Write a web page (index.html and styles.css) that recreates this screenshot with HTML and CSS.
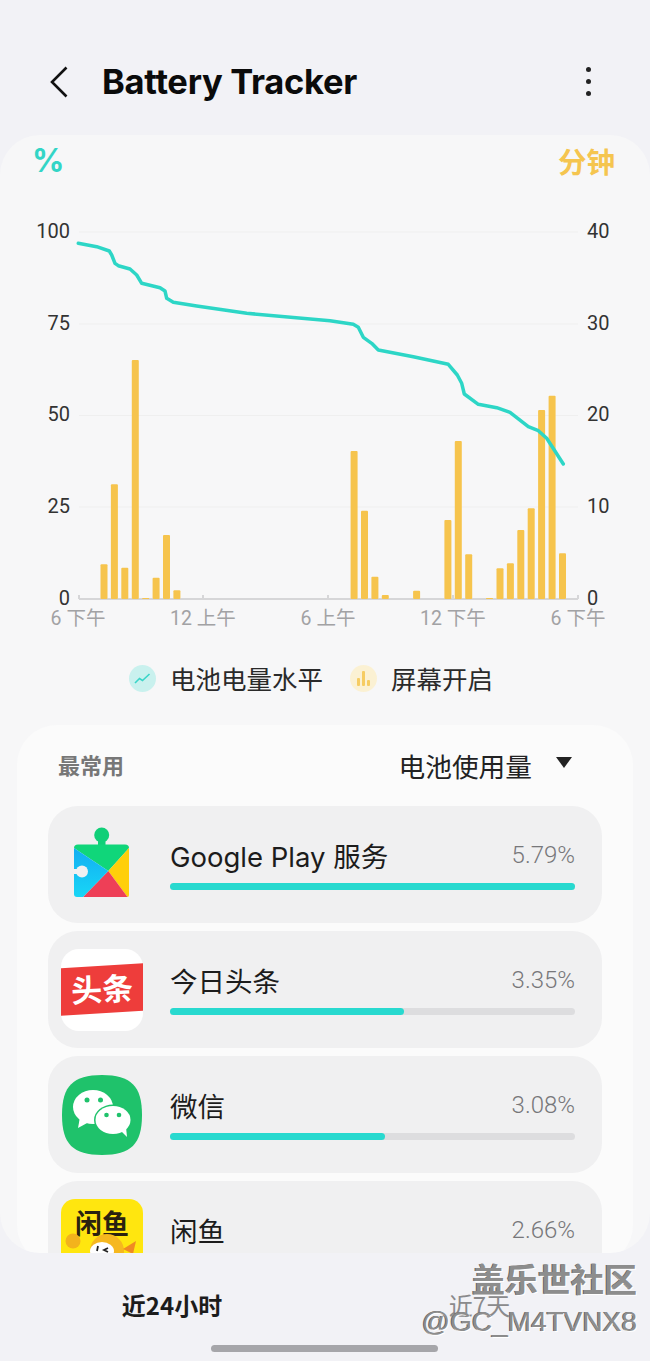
FILE: index.html
```html
<!DOCTYPE html>
<html lang="zh-CN">
<head>
  <meta charset="UTF-8">
  <meta name="viewport" content="width=device-width, initial-scale=1.0">
  <title>Battery Tracker</title>
  <link rel="stylesheet" href="styles.css">
</head>
<body>
  <div class="screen">
    <header class="topbar">
      <svg class="back-icon" viewBox="0 0 20 32" width="20" height="32"><path d="M17.5 1.5 3 16l14.5 14.5"/></svg>
      <h1 class="title">Battery Tracker</h1>
      <div class="more-icon"><span></span><span></span><span></span></div>
    </header>

    <main class="content">
      <section class="chart-card">
        <div class="units">
          <span class="unit-left">%</span>
          <span class="unit-right">分钟</span>
        </div>

        <svg class="chart" viewBox="0 200 650 440" width="650" height="440">
          <g class="grid">
            <line x1="79" x2="578" y1="232" y2="232"/>
            <line x1="79" x2="578" y1="324" y2="324"/>
            <line x1="79" x2="578" y1="415.5" y2="415.5"/>
            <line x1="79" x2="578" y1="507" y2="507"/>
          </g>
          <g class="axis">
            <line x1="79" x2="578" y1="599" y2="599"/>
            <line x1="79" x2="79" y1="595" y2="599"/>
            <line x1="203" x2="203" y1="595" y2="599"/>
            <line x1="328" x2="328" y1="595" y2="599"/>
            <line x1="453" x2="453" y1="595" y2="599"/>
            <line x1="578" x2="578" y1="595" y2="599"/>
          </g>
          <g class="bars">
            <rect x="100.5" y="564.3" width="7" height="34.7" rx="1"/>
            <rect x="110.9" y="484.3" width="7" height="114.7" rx="1"/>
            <rect x="121.3" y="567.7" width="7" height="31.3" rx="1"/>
            <rect x="131.8" y="360" width="7" height="239" rx="1"/>
            <rect x="142.2" y="598" width="7" height="1" rx="0.5"/>
            <rect x="152.6" y="577.7" width="7" height="21.3" rx="1"/>
            <rect x="163" y="535" width="7" height="64" rx="1"/>
            <rect x="173.4" y="590.3" width="7" height="8.7" rx="1"/>
            <rect x="350.6" y="451" width="7" height="148" rx="1"/>
            <rect x="361" y="510.7" width="7" height="88.3" rx="1"/>
            <rect x="371.4" y="576.7" width="7" height="22.3" rx="1"/>
            <rect x="381.8" y="595" width="7" height="4" rx="1"/>
            <rect x="413.1" y="590.7" width="7" height="8.3" rx="1"/>
            <rect x="444.4" y="520" width="7" height="79" rx="1"/>
            <rect x="454.8" y="441" width="7" height="158" rx="1"/>
            <rect x="465.2" y="554.3" width="7" height="44.7" rx="1"/>
            <rect x="486" y="598" width="7" height="1" rx="0.5"/>
            <rect x="496.5" y="568.3" width="7" height="30.7" rx="1"/>
            <rect x="506.9" y="563.3" width="7" height="35.7" rx="1"/>
            <rect x="517.3" y="530" width="7" height="69" rx="1"/>
            <rect x="527.7" y="508.3" width="7" height="90.7" rx="1"/>
            <rect x="538.1" y="410" width="7" height="189" rx="1"/>
            <rect x="548.6" y="395.7" width="7" height="203.3" rx="1"/>
            <rect x="559" y="553.3" width="7" height="45.7" rx="1"/>
          </g>
          <polyline class="level" points="78.3,243.3 96.7,246.7 109.3,251 111.7,255 115,263.3 118.3,265.7 130,269 136.7,275 141.7,283.3 160,287.7 165,291 166.7,298.3 173.3,302.3 196.7,306 246.7,313.3 330,320.7 353.3,324.3 358.3,327.3 363.3,337.3 371.7,343.3 378.3,350 413.3,356.7 448.3,364.3 457.3,375 461.7,383.3 464.3,394 478.3,404.3 496.7,407.7 510,412.3 528.3,426.7 538.3,430.7 546.7,438.3 563.3,464"/>
          <g class="y-left">
            <text x="70" y="238">100</text>
            <text x="70" y="330">75</text>
            <text x="70" y="421">50</text>
            <text x="70" y="513">25</text>
            <text x="70" y="605">0</text>
          </g>
          <g class="y-right">
            <text x="587" y="238">40</text>
            <text x="587" y="330">30</text>
            <text x="587" y="421">20</text>
            <text x="587" y="513">10</text>
            <text x="587" y="605">0</text>
          </g>
          <g class="x-labels">
            <text x="78" y="625">6 下午</text>
            <text x="203" y="625">12 上午</text>
            <text x="328" y="625">6 上午</text>
            <text x="453" y="625">12 下午</text>
            <text x="578" y="625">6 下午</text>
          </g>
        </svg>

        <div class="legend">
          <div class="legend-item">
            <svg class="legend-icon" viewBox="0 0 27 27" width="27" height="27">
              <circle cx="13.5" cy="13.5" r="13.5" fill="#c9f1ee"/>
              <path d="M6 18l4.5-4.5 3 2L20.5 9" fill="none" stroke="#3ad5c8" stroke-width="1.6"/>
            </svg>
            <span>电池电量水平</span>
          </div>
          <div class="legend-item">
            <svg class="legend-icon" viewBox="0 0 27 27" width="27" height="27">
              <circle cx="13.5" cy="13.5" r="13.5" fill="#fbf1d3"/>
              <rect x="7" y="13" width="3" height="8" rx="1" fill="#f6cc62"/>
              <rect x="12" y="6" width="3" height="15" rx="1" fill="#f6cc62"/>
              <rect x="17" y="15" width="3" height="6" rx="1" fill="#f6cc62"/>
            </svg>
            <span>屏幕开启</span>
          </div>
        </div>
      </section>

      <section class="usage-card">
        <div class="usage-head">
          <span class="usage-label">最常用</span>
          <span class="usage-select">电池使用量<i class="caret"></i></span>
        </div>

        <div class="app-row">
          <svg class="app-icon" viewBox="0 0 82 82" width="82" height="82">
            <defs>
              <linearGradient id="playBlue" x1="0" y1="0" x2="0" y2="1">
                <stop offset="0" stop-color="#12aef2"/>
                <stop offset="1" stop-color="#18d6f6"/>
              </linearGradient>
            </defs>
            <circle cx="40.7" cy="11" r="7.5" fill="#10cf78"/>
            <rect x="37" y="14" width="7.5" height="8" fill="#10cf78"/>
            <path d="M13 24Q13 20.5 17 20.5H64Q68 20.5 68 24L47.3 47Z" fill="#10d67a"/>
            <path d="M68 24V71Q68 73 66.5 73L47.3 47Z" fill="#ffcf0a"/>
            <path d="M47.3 47 66.5 73H22Z" fill="#ee3f57"/>
            <path d="M13 24 47.3 47 22 73H16Q13 73 13 70Z" fill="url(#playBlue)"/>
            <circle cx="21" cy="47.5" r="6" fill="#f0f0f1"/>
            <rect x="12" y="45" width="6" height="5" fill="#f0f0f1"/>
          </svg>
          <div class="app-info">
            <div class="app-line"><span class="app-name">Google Play 服务</span><span class="app-pct">5.79%</span></div>
            <div class="track"><div class="fill" style="width: 100%"></div></div>
          </div>
        </div>

        <div class="app-row">
          <svg class="app-icon" viewBox="0 0 82 82" width="82" height="82">
            <rect width="82" height="82" rx="18" fill="#fff"/>
            <path d="M0 19.3 82 14.3V61.7L0 66.7Z" fill="#ee3d3b"/>
            <text class="toutiao-text" x="41" y="52" transform="rotate(-3 41 40)">头条</text>
          </svg>
          <div class="app-info">
            <div class="app-line"><span class="app-name">今日头条</span><span class="app-pct">3.35%</span></div>
            <div class="track"><div class="fill" style="width: 57.8%"></div></div>
          </div>
        </div>

        <div class="app-row">
          <svg class="app-icon" viewBox="0 0 82 82" width="82" height="82">
            <path d="M41 1C70 1 81 12 81 41S70 81 41 81 1 70 1 41 12 1 41 1Z" fill="#1fc26b"/>
            <ellipse cx="32" cy="33" rx="20" ry="17" fill="#fff"/>
            <path d="M19 43l-2 11 11-6z" fill="#fff"/>
            <ellipse cx="52" cy="46" rx="19" ry="15.5" fill="#1fc26b"/>
            <ellipse cx="52" cy="46" rx="17.5" ry="14" fill="#fff"/>
            <path d="M60 57l6 6-1-10z" fill="#fff"/>
            <circle cx="26" cy="26" r="2.5" fill="#1fc26b"/>
            <circle cx="39.5" cy="26" r="2.5" fill="#1fc26b"/>
            <circle cx="45.5" cy="41" r="2.3" fill="#1fc26b"/>
            <circle cx="58" cy="41" r="2.3" fill="#1fc26b"/>
          </svg>
          <div class="app-info">
            <div class="app-line"><span class="app-name">微信</span><span class="app-pct">3.08%</span></div>
            <div class="track"><div class="fill" style="width: 53%"></div></div>
          </div>
        </div>

        <div class="app-row">
          <svg class="app-icon" viewBox="0 0 82 82" width="82" height="82">
            <rect width="82" height="82" rx="14" fill="#ffe60f"/>
            <text class="xianyu-text" x="41" y="35">闲鱼</text>
            <circle cx="46" cy="52" r="17" fill="#f6b81f"/>
            <ellipse cx="41" cy="52" rx="12" ry="9" fill="#fff"/>
            <path d="M37 47l-1 5M47 49l-4 2 4 2" fill="none" stroke="#222" stroke-width="1.8"/>
            <circle cx="12" cy="42" r="7.5" fill="#f3b31c"/>
            <path d="M62 50l13-8-3 13z" fill="#f08a24"/>
          </svg>
          <div class="app-info">
            <div class="app-line"><span class="app-name">闲鱼</span><span class="app-pct">2.66%</span></div>
            <div class="track"><div class="fill" style="width: 44.7%"></div></div>
          </div>
        </div>
      </section>
    </main>

    <nav class="tabs">
      <span class="tab tab-active">近24小时</span>
      <span class="tab">近7天</span>
    </nav>
    <div class="home-bar"></div>

    <div class="watermark">
      <div class="wm-top">盖乐世社区</div>
      <div class="wm-bottom">@GC_M4TVNX8</div>
    </div>
  </div>
</body>
</html>
```

FILE: styles.css
```css
* {
  box-sizing: border-box;
}
body {
  margin: 0;
  background: #f2f2f6;
  font-family: "Noto Sans CJK SC", Roboto, sans-serif;
  color: #222;
}
.screen {
  position: relative;
  width: 650px;
  height: 1361px;
  overflow: hidden;
  display: flex;
  flex-direction: column;
}

/* top bar */
.topbar {
  height: 135px;
  flex-shrink: 0;
  display: flex;
  align-items: center;
  padding: 28px 59px 0 49px;
}
.back-icon path {
  fill: none;
  stroke: #111;
  stroke-width: 2.6;
}
.title {
  margin: 0 0 0 33px;
  flex: 1;
  font-family: Inter, Roboto, sans-serif;
  font-size: 34.5px;
  font-weight: 700;
  letter-spacing: -0.3px;
  color: #0b0b0b;
}
.more-icon {
  display: flex;
  flex-direction: column;
  gap: 7px;
}
.more-icon span {
  width: 5px;
  height: 5px;
  border-radius: 50%;
  background: #222;
}

/* main card */
.content {
  height: 1118px;
  flex-shrink: 0;
  background: #f7f7f8;
  border-radius: 40px;
  overflow: hidden;
}
.chart-card {
  height: 590px;
}
.units {
  height: 65px;
  display: flex;
  justify-content: space-between;
  align-items: center;
  padding: 0 35px 15px 32px;
  font-weight: 700;
}
.unit-left {
  font-family: Inter, sans-serif;
  font-size: 32px;
  color: #33d5c6;
}
.unit-right {
  font-size: 28.5px;
  color: #f5c54f;
}
.chart {
  display: block;
}
.grid line {
  stroke: #efefef;
  stroke-width: 1;
}
.axis line {
  stroke: #d6d6d8;
  stroke-width: 2;
}
.bars rect {
  fill: #f6c44d;
}
.level {
  fill: none;
  stroke: #2dd6c6;
  stroke-width: 3.5;
  stroke-linejoin: round;
  stroke-linecap: round;
}
.y-left text,
.y-right text {
  font-family: Roboto, sans-serif;
  font-size: 20px;
  fill: #333;
}
.y-left text {
  text-anchor: end;
}
.x-labels text {
  font-family: Roboto, "Noto Sans CJK SC", sans-serif;
  font-size: 19.5px;
  fill: #a2a2a4;
  text-anchor: middle;
}
.legend {
  display: flex;
  justify-content: center;
  gap: 27px;
  margin-top: 20px;
  padding-right: 28px;
  font-size: 25.5px;
  line-height: 36px;
  color: #2a2a2a;
}
.legend-item {
  display: flex;
  align-items: center;
  gap: 14px;
}

/* usage list */
.usage-card {
  margin: 0 17px;
  padding: 0 31px;
  height: 540px;
  background: #fbfbfb;
  border-radius: 40px;
}
.usage-head {
  height: 81px;
  display: flex;
  justify-content: space-between;
  align-items: center;
  padding: 0 30px 0 10px;
}
.usage-label {
  font-size: 22px;
  font-weight: 700;
  color: #777;
  margin-bottom: 3px;
}
.usage-select {
  display: flex;
  align-items: center;
  gap: 24px;
  font-size: 26.7px;
  color: #222;
}
.caret {
  width: 0;
  height: 0;
  border-left: 8px solid transparent;
  border-right: 8px solid transparent;
  border-top: 11px solid #222;
  margin-bottom: 6px;
}
.app-row {
  height: 117px;
  margin-bottom: 8px;
  display: flex;
  align-items: center;
  gap: 27px;
  padding: 0 27px 0 13px;
  background: #f0f0f1;
  border-radius: 30px;
}
.app-icon {
  flex-shrink: 0;
}
.app-info {
  flex: 1;
  padding-bottom: 2px;
}
.app-line {
  display: flex;
  justify-content: space-between;
  align-items: center;
  height: 40px;
  margin-bottom: 6px;
}
.app-name {
  font-family: Inter, "Noto Sans CJK SC", sans-serif;
  font-size: 27.5px;
  color: #1c1c1c;
  margin-bottom: 4px;
}
.app-pct {
  font-family: Roboto, sans-serif;
  font-size: 24px;
  font-weight: 300;
  color: #77777a;
  margin-bottom: 5px;
}
.track {
  height: 7px;
  border-radius: 4px;
  background: #dddddf;
}
.fill {
  height: 100%;
  border-radius: 4px;
  background: #28d9cf;
}
.toutiao-text {
  font-size: 31px;
  font-weight: 700;
  fill: #fff;
  text-anchor: middle;
}
.xianyu-text {
  font-size: 27px;
  font-weight: 700;
  fill: #2a2210;
  text-anchor: middle;
}

/* bottom tabs */
.tabs {
  flex: 1;
  display: flex;
  align-items: flex-start;
  padding-top: 37px;
  background: #f2f2f6;
  position: relative;
}
.tab {
  width: 50%;
  text-align: center;
  font-size: 24px;
  line-height: 30px;
  color: #8a8a8c;
}
.tab-active {
  padding-left: 19px;
  font-weight: 700;
  color: #1c1c1c;
}
.tab:last-child {
  padding-right: 16px;
}
.home-bar {
  position: absolute;
  left: 211px;
  bottom: 9px;
  width: 227px;
  height: 7px;
  border-radius: 4px;
  background: #a6a6aa;
}

/* watermark over the corner */
.watermark {
  position: absolute;
  right: 13px;
  bottom: 22px;
  text-align: right;
  color: #8d8d8d;
  text-shadow: 1px 1px 0 #fff, -1px 0 0 #666;
}
.wm-top {
  font-size: 33px;
  line-height: 44px;
  margin-bottom: 5px;
  font-weight: 700;
}
.wm-bottom {
  font-family: "Liberation Sans", sans-serif;
  font-size: 28px;
  line-height: 34px;
}
```
